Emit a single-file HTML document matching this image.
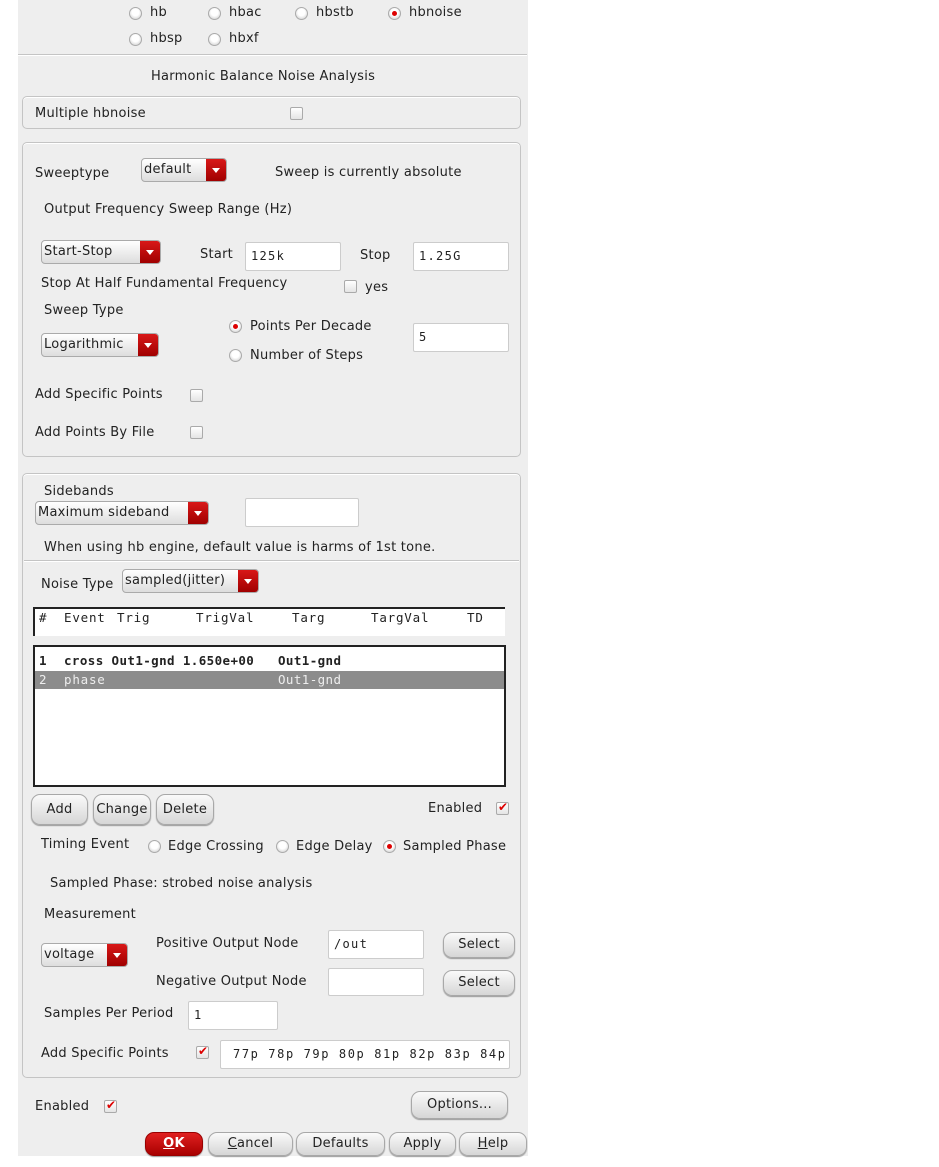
<!DOCTYPE html>
<html><head><meta charset="utf-8"><style>
*{box-sizing:border-box;margin:0;padding:0}
body{width:939px;height:1167px;background:#fff;position:relative;overflow:hidden;font-family:"DejaVu Sans","Liberation Sans",sans-serif;font-size:13px;letter-spacing:0.25px;color:#222}
#dlg{position:absolute;left:18px;top:0;width:510px;height:1156px;background:#eeeeee}
.a{position:absolute}
.t{position:absolute;white-space:nowrap;line-height:16px;transform:translateY(-8px)}
.box{position:absolute;border:1px solid #c4c4c4;border-radius:5px;box-shadow:inset 0 1px 0 #fff}
.rb{position:absolute;width:13px;height:13px;border-radius:50%;background:radial-gradient(circle at 50% 40%,#fff 40%,#d8d8d8 80%);border:1px solid #aaa;transform:translate(-6px,-6px)}
.rb.on::after{content:"";position:absolute;left:3px;top:3px;width:5px;height:5px;border-radius:50%;background:#d00}
.cb{position:absolute;width:13px;height:13px;border:1px solid #aaa;border-radius:2px;background:linear-gradient(#fff,#e4e4e4)}
.cb.on::after{content:"✔";position:absolute;left:1px;top:-3px;color:#d00;font-size:12px;font-weight:bold}
.combo{position:absolute;height:24px;border:1px solid #aaa;border-radius:4px;background:linear-gradient(#fff,#ddd);overflow:hidden;line-height:21px;padding-left:2px;white-space:nowrap}
.combo .r{position:absolute;right:0;top:0;width:20px;height:100%;background:linear-gradient(#d81818,#a00000)}
.combo .r::after{content:"";position:absolute;left:6px;top:9px;border-left:4px solid transparent;border-right:4px solid transparent;border-top:5px solid #fff}
.inp{position:absolute;background:#fff;border:1px solid #ccc;border-radius:2px;line-height:26px;padding-left:5px;white-space:nowrap;font-family:"DejaVu Sans Mono","Liberation Mono",monospace;font-size:12px;letter-spacing:1.3px}
.btn{position:absolute;border:1px solid #a8a8a8;border-radius:9px;background:linear-gradient(#fafafa,#d6d6d6);text-align:center;white-space:nowrap;box-shadow:0 1px 1px #999}
.m{position:absolute;white-space:nowrap;line-height:16px;transform:translateY(-8px);font-family:"DejaVu Sans Mono","Liberation Mono",monospace;font-size:12.5px;letter-spacing:0.8px}
</style></head><body>
<div id="dlg"></div>
<div class="rb" style="left:135px;top:13px"></div><div class="t" style="left:150px;top:13px">hb</div>
<div class="rb" style="left:214px;top:13px"></div><div class="t" style="left:229px;top:13px">hbac</div>
<div class="rb" style="left:301px;top:13px"></div><div class="t" style="left:316px;top:13px">hbstb</div>
<div class="rb on" style="left:394px;top:13px"></div><div class="t" style="left:409px;top:13px">hbnoise</div>
<div class="rb" style="left:135px;top:39px"></div><div class="t" style="left:150px;top:39px">hbsp</div>
<div class="rb" style="left:214px;top:39px"></div><div class="t" style="left:229px;top:39px">hbxf</div>
<div class="a" style="left:18px;top:54px;width:509px;height:1px;background:#c4c4c4"></div>
<div class="a" style="left:18px;top:55px;width:509px;height:1px;background:#fff"></div>
<div class="t" style="left:151px;top:77px">Harmonic Balance Noise Analysis</div>

<div class="box" style="left:22px;top:96px;width:499px;height:33px"></div>
<div class="t" style="left:35px;top:114px">Multiple hbnoise</div>
<div class="cb" style="left:290px;top:107px"></div>

<div class="box" style="left:22px;top:142px;width:499px;height:315px"></div>
<div class="t" style="left:35px;top:174px">Sweeptype</div>
<div class="combo" style="left:141px;top:158px;width:86px">default<div class="r"></div></div>
<div class="t" style="left:275px;top:173px">Sweep is currently absolute</div>
<div class="t" style="left:44px;top:210px">Output Frequency Sweep Range (Hz)</div>
<div class="combo" style="left:41px;top:240px;width:120px">Start-Stop<div class="r"></div></div>
<div class="t" style="left:200px;top:255px">Start</div>
<div class="inp" style="left:245px;top:242px;width:96px;height:29px">125k</div>
<div class="t" style="left:360px;top:256px">Stop</div>
<div class="inp" style="left:413px;top:242px;width:96px;height:29px">1.25G</div>
<div class="t" style="left:41px;top:284px">Stop At Half Fundamental Frequency</div>
<div class="cb" style="left:344px;top:280px"></div><div class="t" style="left:365px;top:288px">yes</div>
<div class="t" style="left:44px;top:311px">Sweep Type</div>
<div class="combo" style="left:41px;top:333px;width:118px">Logarithmic<div class="r"></div></div>
<div class="rb on" style="left:235px;top:326px"></div><div class="t" style="left:250px;top:327px">Points Per Decade</div>
<div class="rb" style="left:235px;top:355px"></div><div class="t" style="left:250px;top:356px">Number of Steps</div>
<div class="inp" style="left:413px;top:323px;width:96px;height:29px">5</div>
<div class="t" style="left:35px;top:395px">Add Specific Points</div><div class="cb" style="left:190px;top:389px"></div>
<div class="t" style="left:35px;top:433px">Add Points By File</div><div class="cb" style="left:190px;top:426px"></div>

<div class="box" style="left:22px;top:473px;width:499px;height:605px"></div>
<div class="t" style="left:44px;top:492px">Sidebands</div>
<div class="combo" style="left:35px;top:501px;width:174px">Maximum sideband<div class="r"></div></div>
<div class="inp" style="left:245px;top:498px;width:114px;height:29px"></div>
<div class="t" style="left:44px;top:548px">When using hb engine, default value is harms of 1st tone.</div>
<div class="a" style="left:24px;top:560px;width:495px;height:1px;background:#c4c4c4"></div>
<div class="a" style="left:24px;top:561px;width:495px;height:1px;background:#fff"></div>
<div class="t" style="left:41px;top:585px">Noise Type</div>
<div class="combo" style="left:122px;top:569px;width:137px">sampled(jitter)<div class="r"></div></div>

<div class="a" style="left:33px;top:607px;width:472px;height:29px;background:#fff;border-top:2px solid #222;border-left:2px solid #222"></div>
<div class="m" style="left:39px;top:618px">#</div>
<div class="m" style="left:64px;top:618px">Event</div>
<div class="m" style="left:117px;top:618px">Trig</div>
<div class="m" style="left:196px;top:618px">TrigVal</div>
<div class="m" style="left:292px;top:618px">Targ</div>
<div class="m" style="left:371px;top:618px">TargVal</div>
<div class="m" style="left:467px;top:618px">TD</div>
<div class="a" style="left:33px;top:645px;width:473px;height:142px;background:#fff;border:2px solid #222"></div>
<div class="m" style="left:39px;top:661px;font-weight:bold">1</div>
<div class="m" style="left:64px;top:661px;font-weight:bold;letter-spacing:0.4px">cross Out1-gnd 1.650e+00</div>
<div class="m" style="left:278px;top:661px;font-weight:bold;letter-spacing:0.4px">Out1-gnd</div>
<div class="a" style="left:35px;top:671px;width:469px;height:18px;background:#8c8c8c"></div>
<div class="m" style="left:39px;top:680px;color:#eee">2</div>
<div class="m" style="left:64px;top:680px;color:#eee">phase</div>
<div class="m" style="left:278px;top:680px;color:#eee;letter-spacing:0.4px">Out1-gnd</div>

<div class="btn" style="left:31px;top:794px;width:57px;height:31px;line-height:29px">Add</div>
<div class="btn" style="left:93px;top:794px;width:58px;height:31px;line-height:29px">Change</div>
<div class="btn" style="left:156px;top:794px;width:58px;height:31px;line-height:29px">Delete</div>
<div class="t" style="left:428px;top:809px">Enabled</div><div class="cb on" style="left:496px;top:802px"></div>
<div class="t" style="left:41px;top:845px">Timing Event</div>
<div class="rb" style="left:154px;top:846px"></div><div class="t" style="left:168px;top:847px">Edge Crossing</div>
<div class="rb" style="left:282px;top:846px"></div><div class="t" style="left:296px;top:847px">Edge Delay</div>
<div class="rb on" style="left:389px;top:846px"></div><div class="t" style="left:403px;top:847px">Sampled Phase</div>
<div class="t" style="left:50px;top:884px">Sampled Phase: strobed noise analysis</div>
<div class="t" style="left:44px;top:915px">Measurement</div>
<div class="combo" style="left:41px;top:943px;width:87px">voltage<div class="r"></div></div>
<div class="t" style="left:156px;top:944px">Positive Output Node</div>
<div class="inp" style="left:328px;top:930px;width:96px;height:29px">/out</div>
<div class="btn" style="left:443px;top:932px;width:72px;height:26px;line-height:24px">Select</div>
<div class="t" style="left:156px;top:982px">Negative Output Node</div>
<div class="inp" style="left:328px;top:968px;width:96px;height:28px"></div>
<div class="btn" style="left:443px;top:970px;width:72px;height:26px;line-height:24px">Select</div>
<div class="t" style="left:44px;top:1014px">Samples Per Period</div>
<div class="inp" style="left:188px;top:1001px;width:90px;height:29px">1</div>
<div class="t" style="left:41px;top:1054px">Add Specific Points</div>
<div class="cb on" style="left:196px;top:1046px"></div>
<div class="inp" style="left:220px;top:1040px;width:290px;height:29px;padding-left:12px;white-space:pre;letter-spacing:1.6px">77p 78p 79p 80p 81p 82p 83p 84p</div>

<div class="t" style="left:35px;top:1107px">Enabled</div><div class="cb on" style="left:104px;top:1100px"></div>
<div class="btn" style="left:411px;top:1091px;width:97px;height:28px;line-height:26px">Options...</div>
<div class="btn" style="left:145px;top:1132px;width:58px;height:24px;line-height:22px;background:linear-gradient(#e02020,#a80000);color:#fff;font-weight:bold;border-color:#900"><u>O</u>K</div>
<div class="btn" style="left:208px;top:1132px;width:85px;height:24px;line-height:22px"><u>C</u>ancel</div>
<div class="btn" style="left:296px;top:1132px;width:89px;height:24px;line-height:22px">Defaults</div>
<div class="btn" style="left:389px;top:1132px;width:67px;height:24px;line-height:22px">Apply</div>
<div class="btn" style="left:459px;top:1132px;width:68px;height:24px;line-height:22px"><u>H</u>elp</div>
</body></html>
